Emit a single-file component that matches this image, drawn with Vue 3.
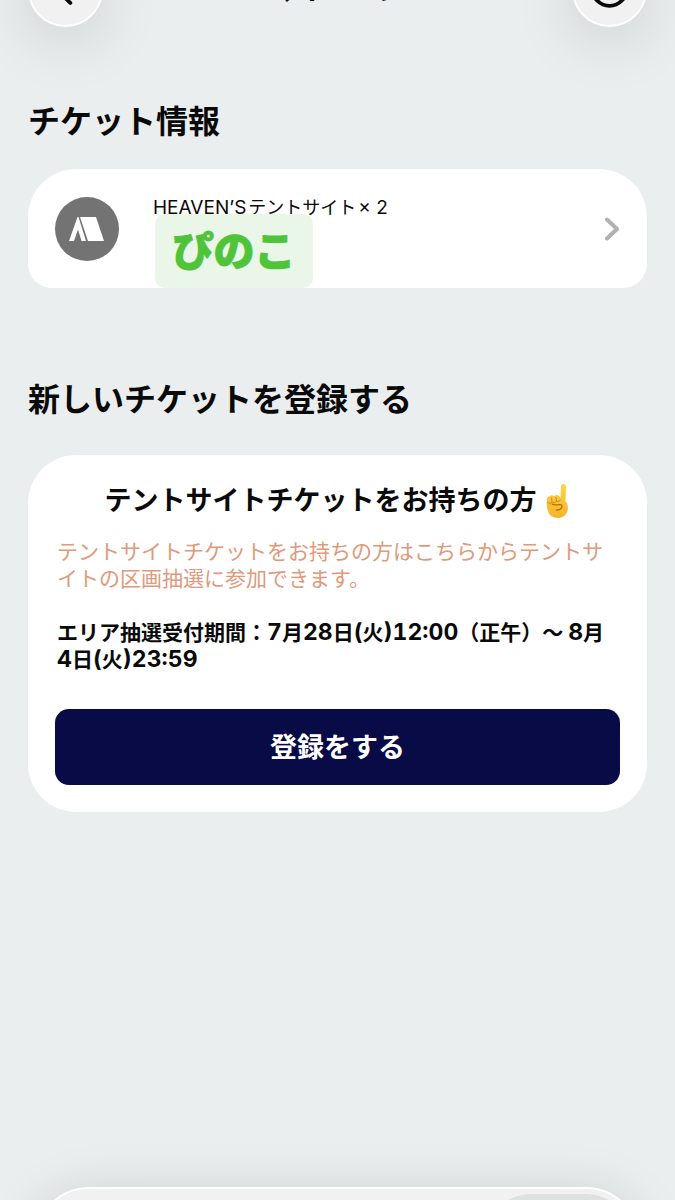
<script setup>
import { ref } from 'vue'

const tickets = ref([
  { id: 1, name: 'HEAVEN’S', site: 'テントサイト', count: 2, owner: 'ぴのこ' }
])
const registering = ref(false)

const register = () => {
  registering.value = true
}
</script>

<template>
  <div class="page">
    <header class="header">
      <button class="round-btn" aria-label="戻る">
        <svg width="74" height="74" viewBox="0 0 74 74">
          <path d="M44 19 L26 35 L42 51" />
        </svg>
      </button>
      <div class="title">マイページ</div>
      <button class="round-btn" aria-label="メニュー">
        <svg width="74" height="74" viewBox="0 0 74 74">
          <circle cx="37" cy="36" r="18" />
        </svg>
      </button>
    </header>

    <main class="content">
      <h2>チケット情報</h2>
      <a v-for="t in tickets" :key="t.id" href="#" class="ticket">
        <svg class="tent" width="64" height="64" viewBox="0 0 64 64">
          <circle cx="32" cy="32" r="32" fill="#737373" />
          <path d="M22.500 20 L14 44 H19 L23 32.500 L26.500 44 H31 L23.500 20Z" fill="#fff" />
          <path d="M25 20 H41 L49 44 H33Z" fill="#fff" />
        </svg>
        <div class="info">
          <span class="name"><span>{{ t.name }}</span><span class="site">{{ t.site }}</span><span>× {{ t.count }}</span></span>
          <span class="owner">{{ t.owner }}</span>
        </div>
        <svg class="chevron" width="16" height="24" viewBox="0 0 16 24">
          <path d="M3 2.500 L13 12 L3 21.500" />
        </svg>
      </a>

      <h2>新しいチケットを登録する</h2>
      <section class="card">
        <h3>
          <span>テントサイトチケットをお持ちの方</span>
          <svg width="26" height="36" viewBox="0 0 26 36" aria-hidden="true">
            <defs>
              <linearGradient id="skin" x1="0" y1="0" x2="0" y2="1">
                <stop offset="0" stop-color="#ffd545" />
                <stop offset="1" stop-color="#f6b32a" />
              </linearGradient>
            </defs>
            <path d="M15.500 16 L16 3 Q16.500 1 18.500 1 Q21 1 21 3.500 L20.500 18 Q24 22 22.500 28 Q20 35 13 35 Q5 35 3 28 Q1 22 2 19 Q1 14 4.500 13.500 Q6.500 11.500 9 13 Q11.500 11 14 13 Q15.500 13.500 15.500 16Z" fill="url(#skin)" />
            <path d="M2.500 19.500 Q5 22 7 19 Q9.500 21 11.500 18 Q13 20 15.500 17 M7 18.500 L6.500 15 M11.500 18 L11 14.500" fill="none" stroke="#d08a12" stroke-width="1" stroke-linecap="round" />
            <path d="M7 21 Q11 22.500 15 21.500 Q18 22 16.500 25 Q15 27.500 11 27" fill="none" stroke="#a8650c" stroke-width="1.200" stroke-linecap="round" />
          </svg>
        </h3>
        <p class="note">テントサイトチケットをお持ちの方はこちらからテントサイトの区画抽選に参加できます。</p>
        <p class="period">エリア抽選受付期間：<b>7</b>月<b>28</b>日<b>(</b>火<b>)12:00</b>（正午）〜 <b>8</b>月<b>4</b>日<b>(</b>火<b>)23:59</b></p>
        <button class="btn-main" :disabled="registering" @click="register">登録をする</button>
      </section>
    </main>

    <nav class="tabbar">
      <a href="#" class="tab-active" aria-label="マイページ"></a>
    </nav>
  </div>
</template>

<style>
body { background: #eaeeef; }
</style>

<style scoped>
.page { position: relative; min-height: 100vh; overflow: hidden; color: #0a0a0a; background: #eaeeef; font-family: Inter, "Noto Sans CJK JP", sans-serif; }

/* header is scrolled mostly out of view, items hang from its bottom edge */
.header { display: flex; justify-content: space-between; align-items: flex-end; height: 27px; padding: 0 28px; }
.round-btn { flex: none; width: 75px; height: 75px; padding: 0; border: 2px solid #fff; border-radius: 50%; background: #f1f1f1; box-shadow: 0 12px 64px rgba(0, 0, 0, 0.14); }
.round-btn svg { display: block; width: 100%; height: 100%; fill: none; stroke: #0a0a0a; stroke-width: 4; stroke-linecap: round; stroke-linejoin: round; }
.title { padding-bottom: 18px; font-size: 27px; line-height: 36px; font-weight: 700; }

.content { padding: 0 28px 120px; }
h2 { margin: 0; padding: 71px 0 23px; font-size: 32px; line-height: 48px; font-weight: 700; }

.ticket { display: flex; align-items: flex-start; height: 119px; padding: 0 27px; box-sizing: border-box; border-radius: 48px 48px 24px 24px; background: #fff; color: inherit; text-decoration: none; }
.tent { flex: none; margin-top: 28px; }
.info { flex: 1; display: flex; flex-direction: column; align-items: flex-start; padding: 26px 0 0 34px; }
.name { display: flex; align-items: baseline; gap: 2px; font-size: 19px; line-height: 26px; }
.site { font-size: 18px; }
.owner { margin: -7px 0 0 2px; width: 158px; border-radius: 10px; background: #e9f6e8; color: #4fc43a; font-size: 41px; line-height: 74px; font-weight: 900; text-align: center; -webkit-text-stroke: 1px #4fc43a; }
.chevron { flex: none; margin-top: 48px; fill: none; stroke: #b2b2b2; stroke-width: 4; stroke-linecap: round; stroke-linejoin: round; }
.ticket + h2 { padding: 88px 0 31px; }

.card { padding: 25px 27px 27px; border-radius: 48px; background: #fff; }
h3 { display: flex; justify-content: center; align-items: center; gap: 8px; margin: 0; font-size: 27px; line-height: 42px; font-weight: 700; }
p { margin: 0; padding: 0 6px 0 2px; font-size: 21px; line-height: 27px; word-break: break-all; }
.note { margin-top: 16px; color: #e0997b; }
.period { margin-top: 27px; font-weight: 700; }
/* latin digits are set a little larger than the kanji around them */
.period b { font-size: 23px; line-height: 1; font-weight: 700; font-variant-numeric: tabular-nums; }
.btn-main { display: block; width: 100%; height: 76px; margin-top: 36px; padding: 0 0 4px; border: none; border-radius: 14px; background: #080b45; color: #fff; font-family: inherit; font-size: 27px; font-weight: 700; }

.tabbar { position: fixed; left: 36px; right: 36px; bottom: -93px; display: flex; justify-content: flex-end; height: 106px; padding: 5px; box-sizing: border-box; border: 2px solid #fff; border-radius: 53px; background: #f1f1f1; box-shadow: 0 8px 56px rgba(0, 0, 0, 0.14); }
.tab-active { width: 25%; border-radius: 46px; background: #dfe1e1; }
</style>
